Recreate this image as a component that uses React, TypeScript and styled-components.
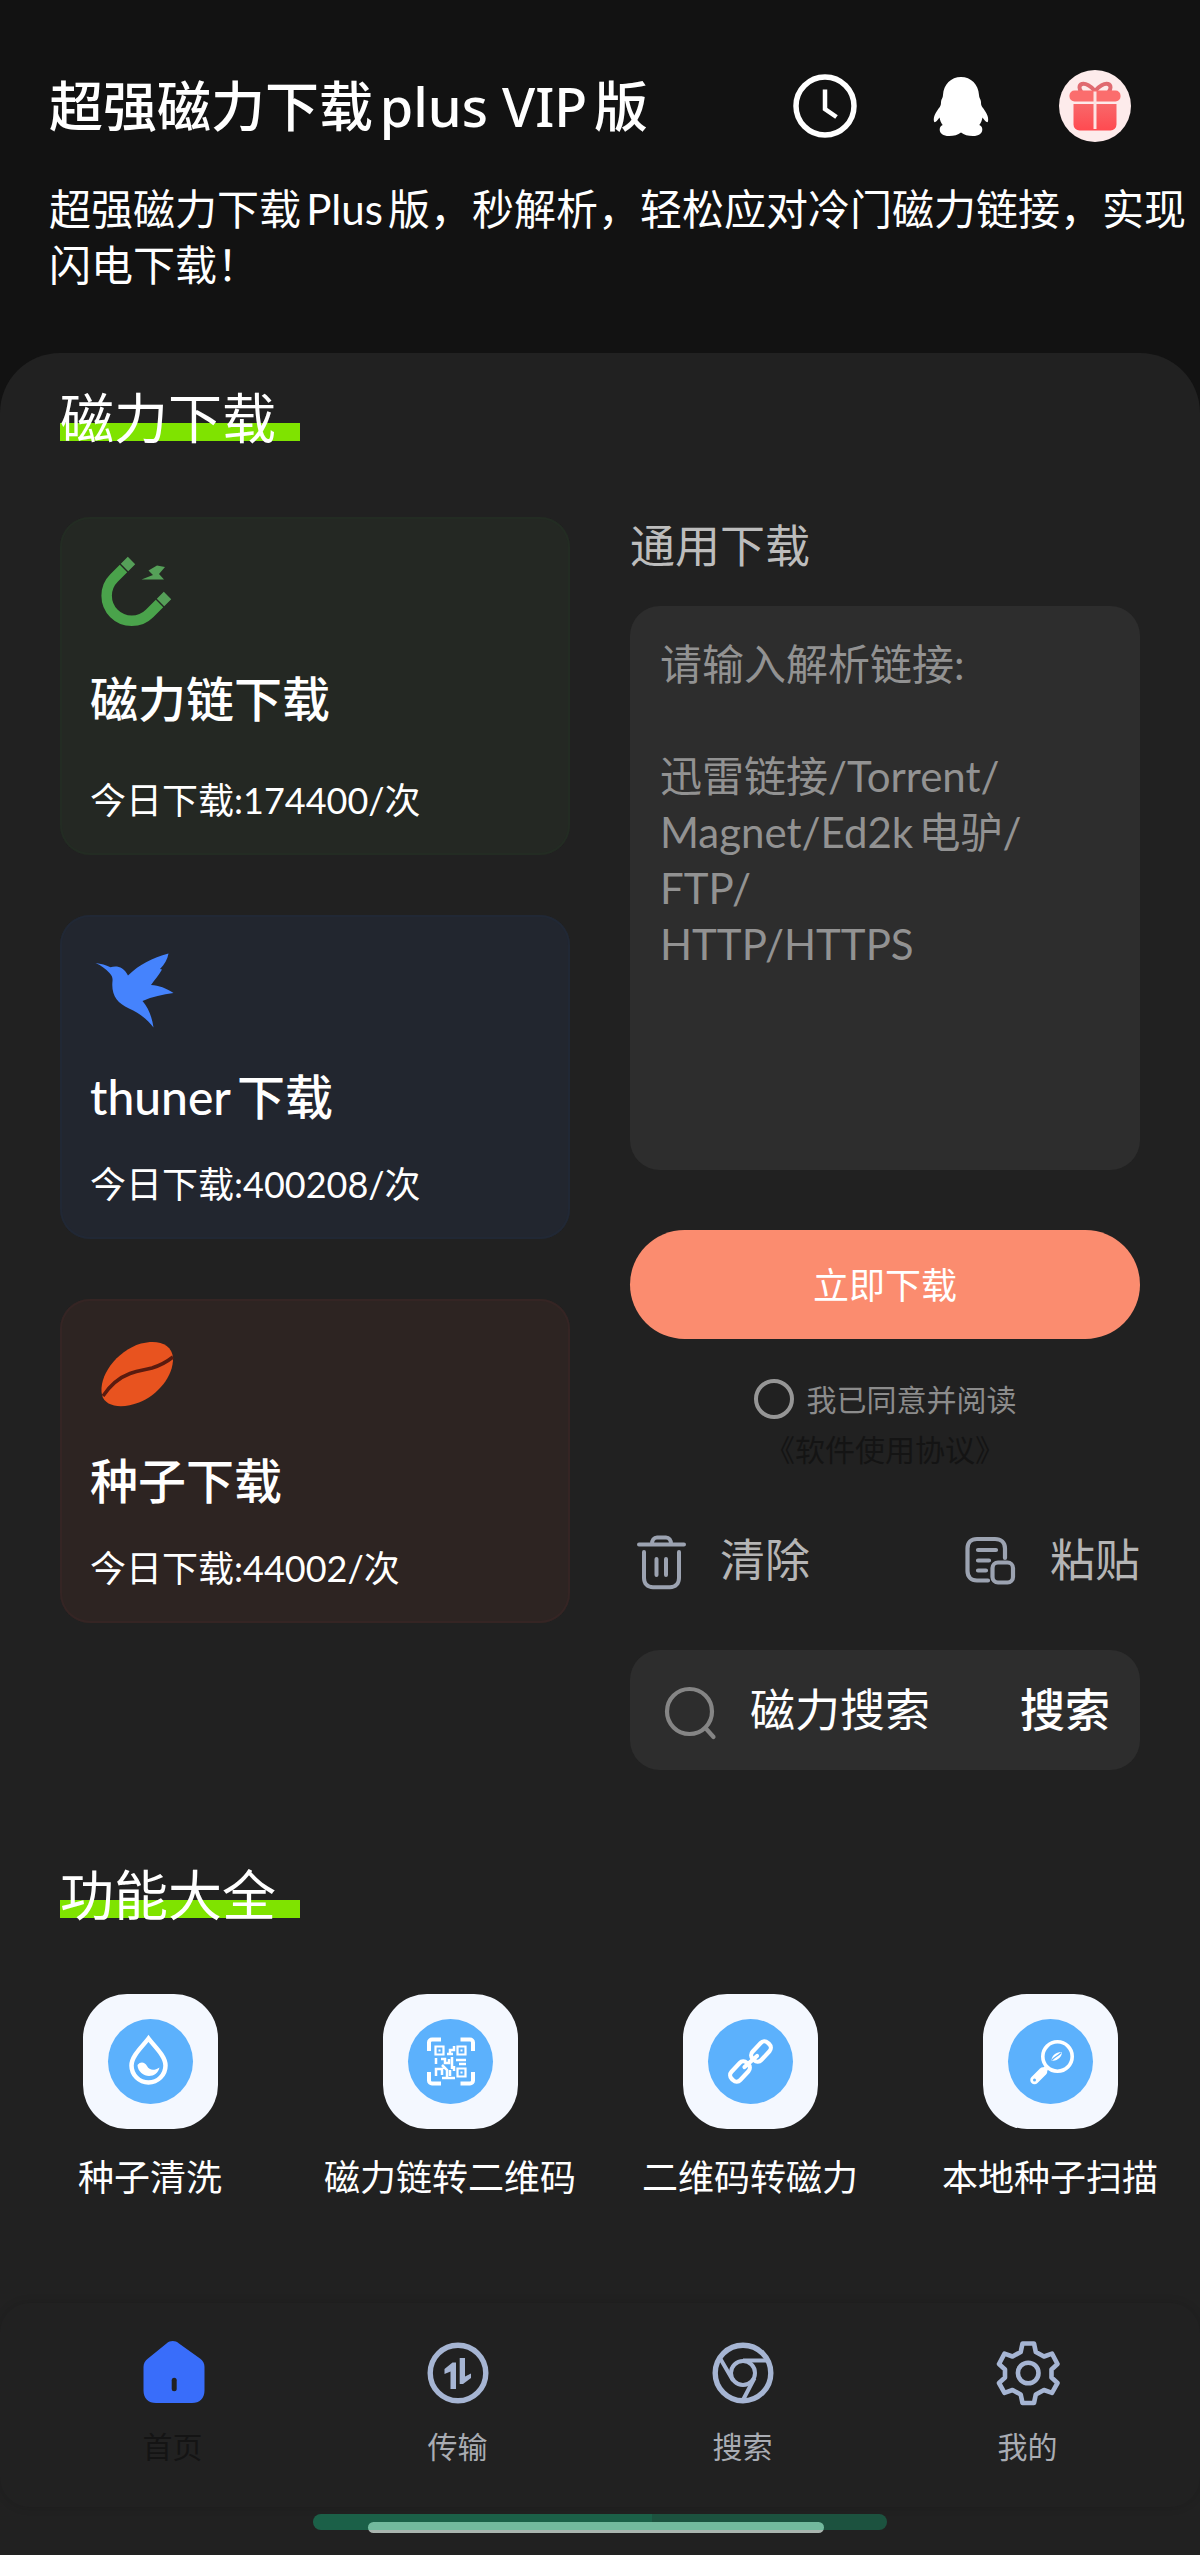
import React from "react";
import styled, { createGlobalStyle } from "styled-components";

const GlobalStyle = createGlobalStyle`
  *, *::before, *::after { box-sizing: border-box; }
  body {
    margin: 0;
    background: #212121;
    font-family: Lato, "Noto Sans CJK SC", sans-serif;
    text-autospace: normal;
  }
  h1, h2, h3, p { margin: 0; font-weight: 400; }
  button, input, textarea {
    margin: 0;
    padding: 0;
    border: 0;
    background: none;
    color: inherit;
    font: inherit;
    letter-spacing: inherit;
  }
  button { cursor: pointer; }
  a { color: inherit; text-decoration: none; }
  svg { display: block; flex: none; }
`;

const Page = styled.div`
  background: #121212;
`;

const Header = styled.header`
  padding: 70px 0 60px 49px;
  color: #fff;
`;

const TitleBar = styled.div`
  display: flex;
  align-items: center;
  justify-content: space-between;
  height: 72px;
  padding-right: 69px;
`;

const AppTitle = styled.h1`
  font-family: "Noto Sans", "Noto Sans CJK SC", sans-serif;
  font-size: 54px;
  line-height: 70px;
  font-weight: 500;
`;

const HeaderActions = styled.div`
  display: flex;
  gap: 63px;
`;

const Intro = styled.p`
  margin-top: 39px;
  font-size: 42px;
  line-height: 56px;
`;

const Panel = styled.main`
  padding-top: 30px;
  border-radius: 60px 60px 0 0;
  background: #212121;
`;

const Section = styled.section`
  & + & { margin-top: 90px; }
`;

const SectionTitle = styled.h2`
  width: 240px;
  margin: 0 60px 62px;
  background: linear-gradient(#7fe300, #7fe300) 0 40px / 100% 18px no-repeat;
  color: #fff;
  font-size: 54px;
  line-height: 72px;
`;

const Columns = styled.div`
  display: grid;
  grid-template-columns: repeat(2, minmax(0, 1fr));
  gap: 60px;
  align-items: start;
  padding: 0 60px;
`;

const CardList = styled.div`
  display: grid;
  gap: 60px;
`;

const Card = styled.a<{ $bg: string; $line: string }>`
  display: block;
  padding: 30px;
  border-radius: 30px;
  background: ${(p) => p.$bg};
  box-shadow: inset 0 0 0 2px ${(p) => p.$line};
  color: #fff;
`;

const CardTitle = styled.h3`
  margin-top: 30px;
  font-size: 48px;
  line-height: 64px;
  font-weight: 500;
`;

const CardCount = styled.p<{ $spaced?: boolean }>`
  margin-top: ${(p) => (p.$spaced ? 44 : 30)}px;
  font-size: 36px;
  line-height: 50px;
`;

const Form = styled.form`
  display: flex;
  flex-direction: column;
`;

const FormLabel = styled.label`
  color: #bdbdbd;
  font-size: 45px;
  line-height: 58px;
`;

const LinkBox = styled.textarea`
  width: 100%;
  height: 564px;
  margin-top: 31px;
  padding: 30px;
  border-radius: 30px;
  outline: none;
  resize: none;
  background: #2d2d2d;
  color: #fff;
  font-size: 42px;
  line-height: 56px;
  &::placeholder { color: #929292; opacity: 1; }
`;

const Submit = styled.button`
  height: 109px;
  margin-top: 60px;
  padding-bottom: 3px;
  border-radius: 55px;
  background: #fb8c6f;
  color: #fff;
  font-size: 36px;
`;

const Agreement = styled.div`
  display: flex;
  flex-direction: column;
  align-items: center;
  gap: 10px;
  margin-top: 40px;
  font-size: 30px;
  line-height: 40px;
`;

const AgreeLabel = styled.label`
  display: flex;
  align-items: center;
  gap: 13px;
  color: #8c8c8c;
`;

const AgreeCheck = styled.input`
  appearance: none;
  width: 40px;
  height: 40px;
  border: 4px solid #969696;
  border-radius: 50%;
  &:checked { background: #fb8c6f; }
`;

const TermsLink = styled.a`
  color: #141414;
`;

const EditActions = styled.div`
  display: flex;
  justify-content: space-between;
  margin-top: 61px;
`;

const EditButton = styled.button`
  display: flex;
  align-items: center;
  gap: 30px;
  height: 60px;
  color: #b5b5b5;
  font-size: 45px;
  line-height: 60px;
`;

const SearchBar = styled.div`
  display: flex;
  align-items: center;
  gap: 30px;
  height: 120px;
  margin-top: 60px;
  padding: 0 30px;
  border-radius: 30px;
  background: #2d2d2d;
  color: #fff;
  font-size: 45px;
  line-height: 60px;
`;

const SearchInput = styled.input`
  flex: 1;
  min-width: 0;
  outline: none;
  &::placeholder { color: #fff; opacity: 1; }
`;

const SearchButton = styled.button`
  font-weight: 500;
`;

const ToolGrid = styled.div`
  display: grid;
  grid-template-columns: repeat(4, minmax(0, 1fr));
`;

const Tool = styled.a`
  display: flex;
  flex-direction: column;
  align-items: center;
  gap: 24px;
  color: #fff;
  font-size: 36px;
  line-height: 48px;
  white-space: nowrap;
`;

const ToolTile = styled.span`
  border-radius: 44px;
  background: #f4f8ff;
`;

const TabBar = styled.nav`
  display: grid;
  grid-template-columns: repeat(4, minmax(0, 1fr));
  margin-top: 102px;
  padding: 37px 30px 41px;
  border-radius: 30px;
  box-shadow: 0 0 10px rgba(0, 0, 0, 0.15);
`;

const Tab = styled.a<{ $active?: boolean }>`
  display: flex;
  flex-direction: column;
  align-items: center;
  gap: 20px;
  color: ${(p) => (p.$active ? "#141414" : "#a9acb3")};
  font-size: 30px;
  line-height: 40px;
`;

const HomeArea = styled.div`
  display: flex;
  justify-content: center;
  padding: 7px 0 24px;
`;

const HomeTrack = styled.div`
  position: relative;
  width: 574px;
  height: 16px;
  border-radius: 8px;
  background: linear-gradient(90deg, #1b6048 59%, #1c523f 59%);
`;

const HomeHandle = styled.div`
  position: absolute;
  top: 8px;
  left: 55px;
  right: 63px;
  height: 11px;
  border-radius: 6px;
  background: linear-gradient(#72b99d 8px, #a9b5af 8px);
`;

const ClockIcon = () => (
  <svg width="72" height="72" viewBox="0 0 72 72" fill="none" stroke="#fff">
    <circle cx="36" cy="36" r="29" strokeWidth="5.500" />
    <path d="M36 19.500V39l11.500 8" strokeWidth="4.500" />
  </svg>
);

const PenguinIcon = () => (
  <svg width="72" height="72" viewBox="0 0 72 72" fill="#fff">
    <path d="M37 7C27 7 19.500 14.500 19 25c0 3-1.800 4-2 7 0 2-.2 3.500-1.200 5C12 42 9 46.500 10 51.500c.8 1.500 2.500.5 5.500-4 .6 3 1.300 5 3.200 7.500-2 .8-3 2.400-3 4.500 0 4 3.500 6.500 9.300 6.500 5 0 9-1 12-3.500 3 2.500 7 3.500 12 3.500 5.800 0 9.300-2.500 9.300-6.500 0-2.100-1-3.700-3-4.500 1.900-2.500 2.600-4.500 3.200-7.500 3 4.500 4.700 5.500 5.500 4 1-5-2-9.500-5.800-14.500-1-1.500-1.200-3-1.200-5-.2-3-2-4-2-7C54.500 14.500 47 7 37 7z" />
  </svg>
);

const GiftIcon = () => (
  <svg width="72" height="72" viewBox="0 0 72 72">
    <defs>
      <linearGradient id="giftBody" x1="0" y1="0" x2="0" y2="1">
        <stop offset="0" stopColor="#f8686a" />
        <stop offset="1" stopColor="#ff4a50" />
      </linearGradient>
    </defs>
    <circle cx="36" cy="36" r="36" fill="#fdebeb" />
    <path d="M36 21c-4-5-9.500-8-13-7-3.500 1.200-3 5.500-.5 8M36 21c4-5 9.500-8 13-7 3.500 1.200 3 5.500.5 8" fill="none" stroke="#e06a70" strokeWidth="4" />
    <rect x="10.500" y="20.500" width="51" height="11" rx="5" fill="#fb6d6d" />
    <path d="M14.500 34h43v20.500a6 6 0 0 1-6 6h-31a6 6 0 0 1-6-6z" fill="url(#giftBody)" />
    <path d="M36 21.500V59" stroke="#fde3e3" strokeWidth="3" />
  </svg>
);

const MagnetIcon = () => (
  <svg width="90" height="90" viewBox="0 0 90 90">
    <path d="M33.500 21.500L24 31A25 25 0 0 0 59.500 66.500l10-10" fill="none" stroke="#4aa34b" strokeWidth="10.500" />
    <path d="M41.500 13.500l-7 7M77.500 48.500l-7 7" fill="none" stroke="#559f58" strokeWidth="10.500" />
    <path d="M67 18.500l8 1.500-6 7 5 5.500H51.500L63 28l-4.500-4.500z" fill="#55a058" />
  </svg>
);

const BirdIcon = () => (
  <svg width="90" height="90" viewBox="0 0 90 90">
    <path d="M5.500 18c6 1 10 1.800 15 4.300 6-1.800 13-.8 17.500 8.200C50 19 62 13 78.500 8.500c-1 6-4 11-8.500 15.500l2 .5c-3.500 6-7 10-11 15.500 8 .5 15 3 22.500 8-11 1.500-21 3.500-31 8 6 7 9.500 16 11 26.500C57 74 49 68 39 63.500 27 58 21 50 22.500 36c.3-3-.5-5.500-3-8-4-4-8-7.500-14-10z" fill="#4583fd" />
  </svg>
);

const SeedIcon = () => (
  <svg width="90" height="90" viewBox="0 0 90 90">
    <path d="M12 66C8 48 26 22 51 14.500 68 10 82 15 83 29c.5 18-15 37-34 44.500C32 80 15 78 12 66z" fill="#e8531f" />
    <path d="M13 67C19 58 28 49 40 44.500c9-3.500 15-3.500 22-5.500 8-2.500 14-5.500 21-11" fill="none" stroke="#5a1b0f" strokeWidth="3.500" />
  </svg>
);

const TrashIcon = () => (
  <svg width="60" height="60" viewBox="0 0 60 60" fill="none" stroke="#9ca3b1" strokeWidth="4" strokeLinecap="round">
    <path d="M9 14.500h45M22 14c0-4 2-6.500 5-6.500h9c3 0 5 2.500 5 6.500M14 22v26c0 5.500 3.500 9.200 9 9.200h17c5.500 0 9-3.700 9-9.200V22M26.500 29v16M36 29v16" />
  </svg>
);

const PasteIcon = () => (
  <svg width="60" height="60" viewBox="0 0 60 60" fill="none" stroke="#9ca3b1" strokeWidth="4.200" strokeLinecap="round">
    <path d="M28 50.500H17c-6 0-9.500-4-9.500-9.500V18.500C7.500 12.500 11 9 17 9h18c6 0 10 3.500 10 9.500V28M18 20h18M18 30.500h11M18 40.500h8" />
    <rect x="32.500" y="32.500" width="20.500" height="20" rx="5.500" />
  </svg>
);

const SearchIcon = () => (
  <svg width="60" height="60" viewBox="0 0 60 60" fill="none" stroke="#858585" strokeWidth="4.200" strokeLinecap="round">
    <circle cx="29.500" cy="31.500" r="22.500" />
    <path d="M45.500 48l8 9" />
  </svg>
);

const TileArt = ({ children }: { children: React.ReactNode }) => (
  <svg width="135" height="135" viewBox="0 0 135 135" fill="none" stroke="#fff">
    <circle cx="67.500" cy="67.500" r="42.500" fill="#5cb1fc" stroke="none" />
    {children}
  </svg>
);

const DropArt = () => (
  <TileArt>
    <path d="M65.500 44.500C59 53 48.500 62 48.500 71.500a17 17 0 0 0 34 0C82.500 62 72 53 65.500 44.500z" strokeWidth="4.500" />
    <path d="M54.500 71c3-4 7.500-3 9.500 1 2.500 4.500 7 5 12.500 1.500-1 5-5.500 8.500-10.500 8.500S54.500 77.500 54.500 71z" fill="#fff" stroke="none" />
  </TileArt>
);

const QrArt = () => (
  <TileArt>
    <path d="M58 45.500H49a3 3 0 0 0-3 3V57M77.500 45.500H87a3 3 0 0 1 3 3V57M58 89.500H49a3 3 0 0 1-3-3V78M77.500 89.500H87a3 3 0 0 0 3-3V78" strokeWidth="4" />
    <path d="M52.500 52.500h8v8h-8zM74.500 52.500h8v8h-8zM74.500 74.500h8v8h-8z" strokeWidth="2.200" />
    <path d="M55.500 55.500h2v2h-2zM77.500 55.500h2v2h-2zM77.500 77.500h2v2h-2z" fill="#fff" stroke="none" />
    <path d="M71 52v4h-4v5M64 60h6M53 64v6M58 65h4v4h4v-4M69 63v12M73 66h10M76 70h7M53 82v-7h6v6M59 71l5 5v7M59 84h13M67 76v6M71 72v5" strokeWidth="2.500" />
  </TileArt>
);

const ChainArt = () => (
  <TileArt>
    <g strokeWidth="4.200" strokeLinecap="round">
      <rect x="67" y="51.500" width="22" height="12" rx="5" transform="rotate(-47 78 57.500)" />
      <rect x="46" y="71.500" width="22" height="12" rx="5" transform="rotate(-47 57 77.500)" />
      <path d="M61.500 73L74 62" />
    </g>
  </TileArt>
);

const ScanArt = () => (
  <TileArt>
    <circle cx="74.500" cy="62.500" r="14.700" strokeWidth="3.600" />
    <path d="M63.500 74l-4 4" strokeWidth="5" />
    <path d="M60 77.500L51.500 86" strokeWidth="8.500" strokeLinecap="round" />
    <circle cx="51.500" cy="86" r="1.500" fill="#5cb1fc" stroke="none" />
    <path d="M68.500 66.500c0-5 5-9 10.500-8.500 0 5-5 9.500-10.500 8.500z" fill="#fff" stroke="none" />
    <path d="M69 66c3-3 5-3.500 9.500-7.500" stroke="#5cb1fc" strokeWidth="1.200" />
  </TileArt>
);

const HomeIcon = () => (
  <svg width="66" height="66" viewBox="0 0 66 66">
    <path d="M26.500 3.500c4-3.200 8.500-3.200 12.500 0L60 18.500c3 2.300 4.500 5 4.500 8.500v23.500c0 8-5 12.500-12.500 12.500H16C8.500 63 3.500 58.500 3.500 50.500V27c0-3.500 1.500-6.200 4.500-8.500z" fill="#396dfa" />
    <path d="M34.200 40.300v8.500" stroke="#212121" strokeWidth="5" strokeLinecap="round" />
  </svg>
);

const TransferIcon = () => (
  <svg width="66" height="66" viewBox="0 0 66 66">
    <circle cx="33" cy="33" r="27.800" fill="none" stroke="#a6b5d3" strokeWidth="5.400" />
    <path d="M31 22.500V49h-5.500V31.500L19.500 34v-5l8-6.500zM34.700 18h5.300v18.500L46 33.500V38l-8 6h-3.300z" fill="#a6b5d3" />
  </svg>
);

const BrowserIcon = () => (
  <svg width="66" height="66" viewBox="0 0 66 66" fill="none" stroke="#a6b5d3">
    <circle cx="33" cy="33" r="27.800" strokeWidth="5.400" />
    <circle cx="33" cy="33" r="12" strokeWidth="4" />
    <path d="M33 20.500h23M10.500 19l12.500 21.500M44.500 38L33.500 59" strokeWidth="4" />
  </svg>
);

const GearIcon = () => (
  <svg width="66" height="66" viewBox="0 0 66 66" fill="none" stroke="#a6b5d3" strokeWidth="4.600" strokeLinejoin="round">
    <path d="M27.500 3.500h11.500l1.800 8.500 8.200 4.500 8-2.800L62.500 24l-6 5.500v8l6 5.500-5.500 9.800-8-2.800-8.200 4.500-1.800 8.500H27.500l-1.800-8.500-8.200-4.500-8 2.800L4 43l6-5.500v-8L4 24l5.500-10.300 8 2.800 8.200-4.500z" />
    <circle cx="33.200" cy="33" r="10.300" />
  </svg>
);

const cards = [
  { title: "磁力链下载", count: 174400, icon: <MagnetIcon />, bg: "#242823", line: "#232c23", spaced: true },
  { title: "thuner下载", count: 400208, icon: <BirdIcon />, bg: "#22262f", line: "#212835" },
  { title: "种子下载", count: 44002, icon: <SeedIcon />, bg: "#2d2422", line: "#352524" },
];

const tools = [
  { name: "种子清洗", art: <DropArt /> },
  { name: "磁力链转二维码", art: <QrArt /> },
  { name: "二维码转磁力", art: <ChainArt /> },
  { name: "本地种子扫描", art: <ScanArt /> },
];

const tabs = [
  { name: "首页", icon: <HomeIcon />, active: true },
  { name: "传输", icon: <TransferIcon /> },
  { name: "搜索", icon: <BrowserIcon /> },
  { name: "我的", icon: <GearIcon /> },
];

const linkHint = "请输入解析链接:\n\n迅雷链接/Torrent/\nMagnet/Ed2k电驴/\nFTP/\nHTTP/HTTPS";

export default function App() {
  return (
    <Page>
      <GlobalStyle />
      <Header>
        <TitleBar>
          <AppTitle>超强磁力下载plus VIP版</AppTitle>
          <HeaderActions>
            <button type="button"><ClockIcon /></button>
            <button type="button"><PenguinIcon /></button>
            <button type="button"><GiftIcon /></button>
          </HeaderActions>
        </TitleBar>
        <Intro>超强磁力下载Plus版，秒解析，轻松应对冷门磁力链接，实现闪电下载！</Intro>
      </Header>

      <Panel>
        <Section>
          <SectionTitle>磁力下载</SectionTitle>
          <Columns>
            <CardList>
              {cards.map((card) => (
                <Card key={card.title} href="#" $bg={card.bg} $line={card.line}>
                  {card.icon}
                  <CardTitle>{card.title}</CardTitle>
                  <CardCount $spaced={card.spaced}>今日下载:{card.count}/次</CardCount>
                </Card>
              ))}
            </CardList>

            <Form onSubmit={(e) => e.preventDefault()}>
              <FormLabel htmlFor="link">通用下载</FormLabel>
              <LinkBox id="link" placeholder={linkHint} />
              <Submit type="submit">立即下载</Submit>
              <Agreement>
                <AgreeLabel>
                  <AgreeCheck type="checkbox" />
                  我已同意并阅读
                </AgreeLabel>
                <TermsLink href="#">《软件使用协议》</TermsLink>
              </Agreement>
              <EditActions>
                <EditButton type="button"><TrashIcon />清除</EditButton>
                <EditButton type="button"><PasteIcon />粘贴</EditButton>
              </EditActions>
              <SearchBar>
                <SearchIcon />
                <SearchInput type="text" placeholder="磁力搜索" />
                <SearchButton type="button">搜索</SearchButton>
              </SearchBar>
            </Form>
          </Columns>
        </Section>

        <Section>
          <SectionTitle>功能大全</SectionTitle>
          <ToolGrid>
            {tools.map((tool) => (
              <Tool key={tool.name} href="#">
                <ToolTile>{tool.art}</ToolTile>
                {tool.name}
              </Tool>
            ))}
          </ToolGrid>
        </Section>

        <TabBar>
          {tabs.map((tab) => (
            <Tab key={tab.name} href="#" $active={tab.active}>
              {tab.icon}
              {tab.name}
            </Tab>
          ))}
        </TabBar>
        <HomeArea>
          <HomeTrack>
            <HomeHandle />
          </HomeTrack>
        </HomeArea>
      </Panel>
    </Page>
  );
}
